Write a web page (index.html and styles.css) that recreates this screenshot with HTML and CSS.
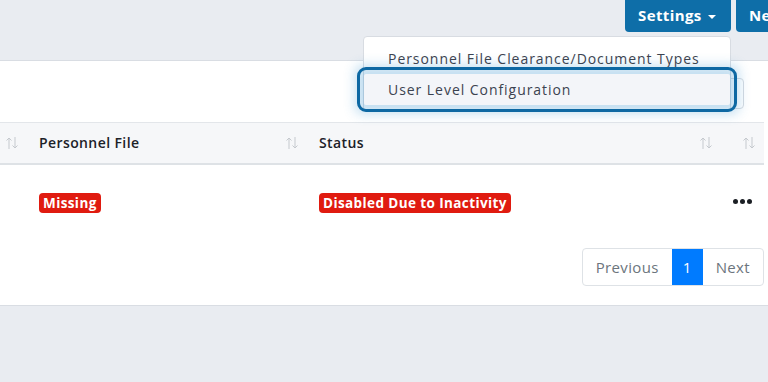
FILE: index.html
```html
<!DOCTYPE html>
<html>
<head>
  <title>Users</title>
  <link rel="stylesheet" href="styles.css">
</head>
<body>
  <div class="topbar">
    <div class="actions">
      <div class="dropdown">
        <button class="btn btn-primary">Settings <span class="caret"></span></button>
        <div class="dropdown-menu">
          <a class="dropdown-item">Personnel File Clearance/Document Types</a>
          <a class="dropdown-item focused">User Level Configuration</a>
        </div>
      </div>
      <button class="btn btn-primary">New User</button>
    </div>
  </div>

  <div class="card">
    <div class="card-tools">
      <input class="search" type="text">
    </div>

    <table class="data-table">
      <thead>
        <tr>
          <th class="col-a"><span class="sort"><svg viewBox="0 0 14 14" width="14" height="14"><path d="M4 13V2M1.5 4.5L4 2l2.5 2.5M10 1v11M7.5 9.5L10 12l2.5-2.5" fill="none" stroke="#c5c9ce" stroke-width="1"/></svg></span></th>
          <th class="col-b">Personnel File<span class="sort"><svg viewBox="0 0 14 14" width="14" height="14"><path d="M4 13V2M1.5 4.5L4 2l2.5 2.5M10 1v11M7.5 9.5L10 12l2.5-2.5" fill="none" stroke="#c5c9ce" stroke-width="1"/></svg></span></th>
          <th class="col-c">Status<span class="sort"><svg viewBox="0 0 14 14" width="14" height="14"><path d="M4 13V2M1.5 4.5L4 2l2.5 2.5M10 1v11M7.5 9.5L10 12l2.5-2.5" fill="none" stroke="#c5c9ce" stroke-width="1"/></svg></span></th>
          <th class="col-d"><span class="sort"><svg viewBox="0 0 14 14" width="14" height="14"><path d="M4 13V2M1.5 4.5L4 2l2.5 2.5M10 1v11M7.5 9.5L10 12l2.5-2.5" fill="none" stroke="#c5c9ce" stroke-width="1"/></svg></span></th>
        </tr>
      </thead>
      <tbody>
        <tr>
          <td></td>
          <td><span class="badge">Missing</span></td>
          <td><span class="badge">Disabled Due to Inactivity</span></td>
          <td class="more"><span class="dots"><i></i><i></i><i></i></span></td>
        </tr>
      </tbody>
    </table>

    <div class="pager">
      <ul class="pagination">
        <li class="page">Previous</li>
        <li class="page active">1</li>
        <li class="page">Next</li>
      </ul>
    </div>
  </div>
</body>
</html>
```

FILE: styles.css
```css
body {
  margin: 0;
  background-color: #e9ecf1;
  font-family: "Open Sans", "DejaVu Sans", sans-serif;
  overflow: hidden;
  width: 768px;
  height: 382px;
}
.topbar {
  height: 60px;
}
.actions {
  display: flex;
  gap: 5px;
  margin-left: 625px;
  white-space: nowrap;
}
.dropdown {
  position: relative;
}
.btn {
  height: 38px;
  margin-top: -6px;
  padding: 4px 15px 0 13px;
  border: none;
  border-radius: 4px;
  font-family: inherit;
  font-size: 15px;
  font-weight: 700;
  letter-spacing: 0.4px;
  color: #fff;
  cursor: pointer;
}
.btn-primary {
  background-color: #0e6ea8;
}
.caret {
  display: inline-block;
  margin-left: 2px;
  vertical-align: middle;
  border-top: 4px solid #fff;
  border-left: 4px solid transparent;
  border-right: 4px solid transparent;
}
.dropdown-menu {
  position: absolute;
  top: 36px;
  right: 0;
  z-index: 10;
  width: 366px;
  padding: 6px 0;
  background: #fff;
  border: 1px solid #d8dce2;
  border-radius: 4px;
}
.dropdown-item {
  display: block;
  height: 31px;
  line-height: 31px;
  padding-left: 24px;
  font-size: 14px;
  letter-spacing: 0.95px;
  color: #3b4350;
}
.dropdown-item.focused {
  background: #f3f5f9;
  outline: 3px solid #0d68a3;
  outline-offset: 4px;
  border-radius: 2px;
  box-shadow: 0 0 12px 9px rgba(60,150,210,0.3);
}
.card {
  background: #fff;
  border-top: 1px solid #d9dde3;
  border-bottom: 1px solid #d9dde3;
  height: 244px;
}
.card-tools {
  height: 61px;
  display: flex;
  justify-content: flex-end;
  align-items: flex-start;
  padding-right: 24px;
  box-sizing: border-box;
  padding-top: 17px;
}
.search {
  width: 340px;
  height: 31px;
  box-sizing: border-box;
  border: 1px solid #d6dae0;
  border-radius: 4px;
}
.data-table {
  border-collapse: collapse;
  margin-left: -60px;
  table-layout: fixed;
  width: 824px;
}
.data-table th {
  box-sizing: border-box;
  height: 41px;
  padding: 0 12px;
  background: #f6f7f9;
  border-top: 1px solid #e3e6ea;
  border-bottom: 2px solid #dee2e6;
  text-align: left;
  font-size: 14px;
  font-weight: 600;
  letter-spacing: 0.4px;
  color: #1c2128;
  position: relative;
}
.col-a { width: 87px; }
.col-b { width: 280px; }
.col-c { width: 414px; }
.col-d { width: 43px; }
.sort {
  position: absolute;
  right: 8px;
  top: 13px;
  line-height: 0;
}
.data-table td {
  height: 74px;
  padding: 0 12px;
  vertical-align: middle;
}
.badge {
  display: inline-block;
  height: 20px;
  line-height: 20px;
  padding: 0 4px;
  border-radius: 4px;
  background: #e01b10;
  color: #fff;
  font-size: 13.5px;
  font-weight: 700;
  letter-spacing: 0.4px;
}
.more {
  text-align: right;
}
.data-table td.more {
  padding-right: 12px;
  padding-left: 0;
}
.dots {
  display: inline-flex;
  gap: 2px;
  vertical-align: middle;
  margin-bottom: 4px;
}
.dots i {
  width: 5px;
  height: 5px;
  border-radius: 50%;
  background: #1b1f24;
}
.pager {
  display: flex;
  justify-content: flex-end;
  padding-right: 4px;
  margin-top: 9px;
}
.pagination {
  display: flex;
  margin: 0;
  padding: 0;
  list-style: none;
  border: 1px solid #dee2e6;
  border-radius: 4px;
  overflow: hidden;
}
.page {
  height: 36px;
  line-height: 36px;
  padding: 0 13px;
  font-size: 15px;
  letter-spacing: 0.35px;
  color: #6c757d;
}
.page.active {
  background: #007bff;
  color: #fff;
  padding: 0 11px;
}
```
